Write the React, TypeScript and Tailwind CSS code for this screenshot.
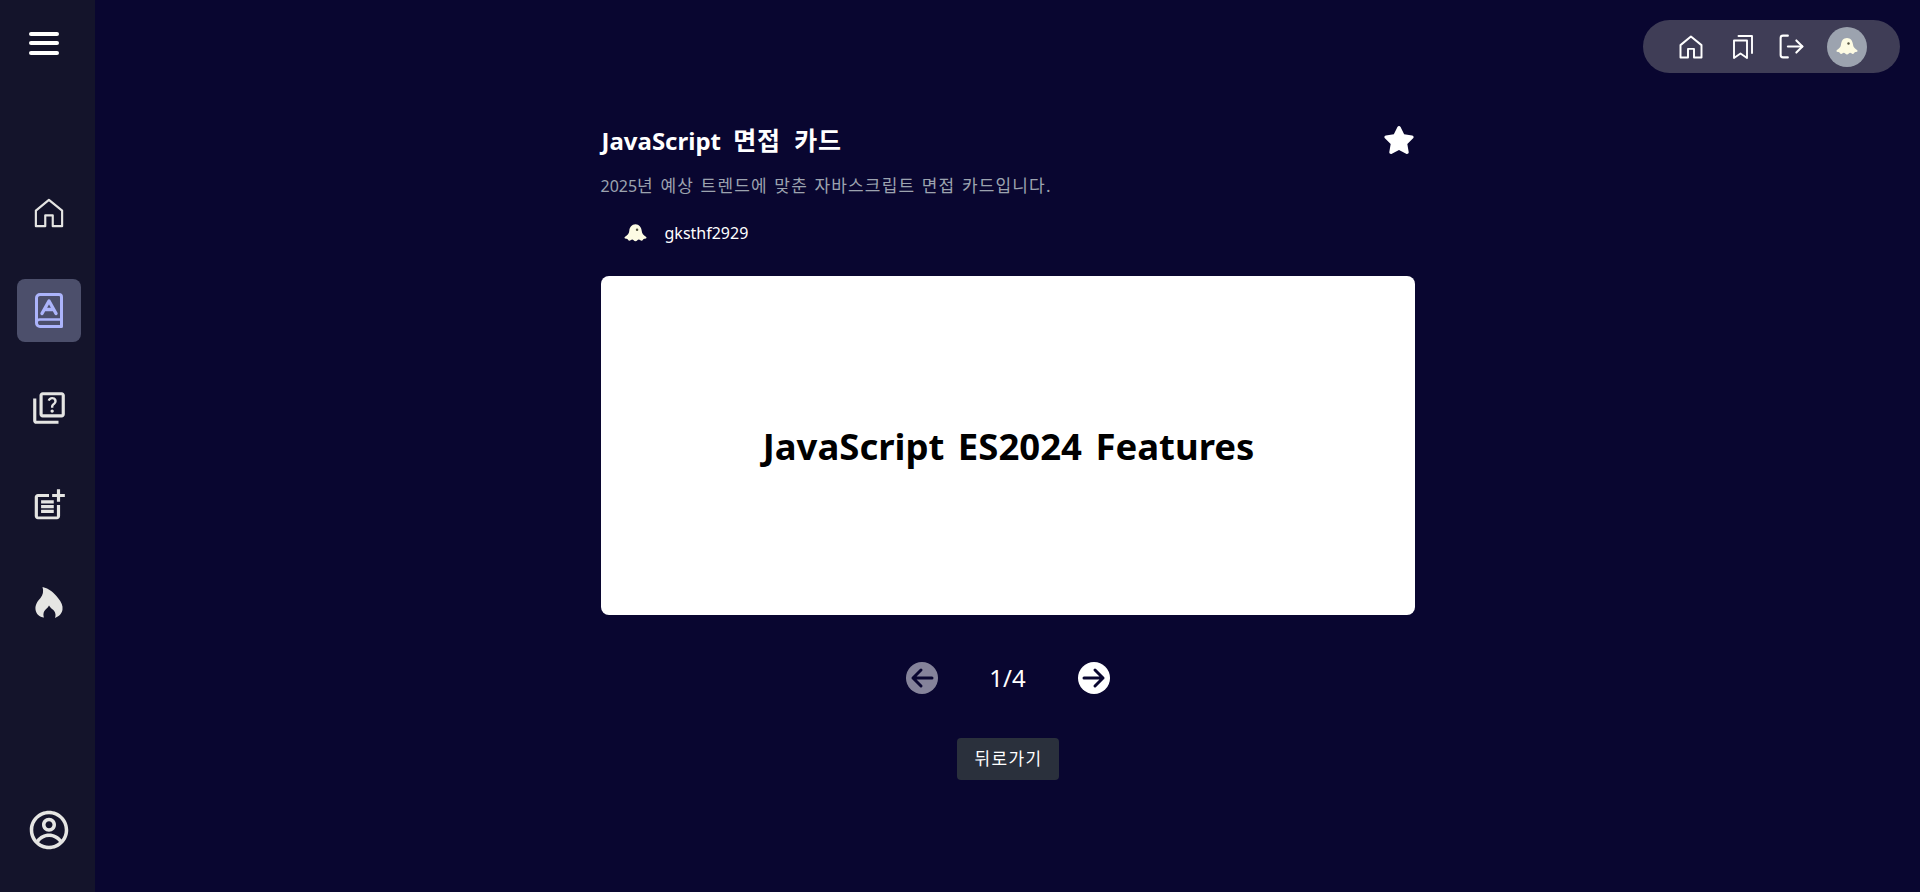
import React from 'react';
import { MdOutlineQuiz, MdOutlinePostAdd } from 'react-icons/md';
import { CgProfile } from 'react-icons/cg';
import { FaStar } from 'react-icons/fa';
import { LuLogOut } from 'react-icons/lu';

const fontStack = { fontFamily: '"Noto Sans", "Noto Sans CJK KR", sans-serif' };

function HomeIcon({ className, strokeWidth = 2 }: { className?: string; strokeWidth?: number }) {
  return (
    <svg className={className} viewBox="0 0 32 32" fill="none" stroke="currentColor" strokeWidth={strokeWidth} strokeLinejoin="round" strokeLinecap="round">
      <path d="M2 13.5 15.9 2 30 13.5V30H20V18.5H12V30H2Z" />
    </svg>
  );
}

function WordBookIcon({ className }: { className?: string }) {
  return (
    <svg className={className} viewBox="0 0 28 35" fill="none" stroke="currentColor" strokeWidth="3" strokeLinejoin="round" strokeLinecap="round">
      <path d="M5 1.500h19a2.500 2.500 0 0 1 2.500 2.500v29.500H5A3.500 3.500 0 0 1 1.500 30V5A3.500 3.500 0 0 1 5 1.500Z" />
      <path d="M1.500 29A3.500 3.500 0 0 1 5 26.500h21.500" strokeWidth="2.4" />
      <path d="M7 20.500 14 8l7 12.500M9.500 16.500h9" strokeWidth="3.400" />
    </svg>
  );
}

function BookmarksIcon({ className }: { className?: string }) {
  return (
    <svg className={className} viewBox="0 0 20 24" fill="none" stroke="currentColor" strokeWidth="1.9" strokeLinejoin="round" strokeLinecap="round">
      <path d="M1 5.500h13V23l-6.500-4.500L1 23Z" />
      <path d="M5.500 1h13.500v17" />
    </svg>
  );
}

function FlameIcon({ className }: { className?: string }) {
  return (
    <svg className={className} viewBox="0 0 28 32" fill="currentColor">
      <path d="M7.500 0C14 1.500 19 5.500 23 11c3.500 4 5 8 4.500 11.500-.5 4-3.500 7-7.500 8.500 1-3 .5-5-.8-7C18 22.500 15.500 21 14 18.500c-1.200 2.500-3.500 3.500-4.600 5.500-1.200 2-1.200 4.500-.4 6.500-4.500-.5-8-3.500-8.500-8C0 18 2.500 14 5.500 11c2.500-3 3.300-7 2-11Z" />
    </svg>
  );
}

// round pager button: disc with the arrow knocked out in the page colour
function PagerArrow({ direction, className }: { direction: 'left' | 'right'; className?: string }) {
  return (
    <svg className={className} viewBox="0 0 32 32" fill="none">
      <circle cx="16" cy="16" r="16" fill="currentColor" />
      <path
        d={direction === 'left' ? 'M26 16H7M15 8l-8 8 8 8' : 'M6 16h19M17 8l8 8-8 8'}
        stroke="#090630"
        strokeWidth="3"
        strokeLinecap="round"
        strokeLinejoin="round"
      />
    </svg>
  );
}

// little ghost mascot used as the avatar
function Ghost({ className }: { className?: string }) {
  return (
    <svg className={className} viewBox="0 0 24 20">
      <path
        fill="#fdfbe3"
        d="M12 1c3.600 0 5.600 2.800 6 6.500.2 2.400 1.600 4 4 5.500 1.200.8.600 2-1 2-.8 0-1.400.2-1.800 1-.6 1.200-2 1.200-2.800.3-.8-.8-1.800-.8-2.600.2-1 1.200-2.600 1.200-3.600 0-.8-1-1.800-1-2.600-.2-.9.900-2.200.9-2.800-.3-.4-.8-1-1-1.800-1-1.600 0-2.200-1.200-1-2 2.400-1.500 3.800-3.100 4-5.500C6.400 3.800 8.400 1 12 1Z"
      />
      <circle cx="13.500" cy="6.500" r="1.200" fill="#55533f" />
    </svg>
  );
}

export default function App() {
  return (
    <div className="flex h-[892px] overflow-hidden bg-[#090630] text-white" style={fontStack}>
      {/* Left rail */}
      <aside className="flex w-[95px] shrink-0 flex-col bg-[#14142b]">
        <button className="ml-[29px] mt-[31px] flex h-[24px] w-[30px] flex-col justify-between py-[0.5px]">
          <span className="block h-[4px] w-[30px] rounded-full bg-white" />
          <span className="block h-[4px] w-[30px] rounded-full bg-white" />
          <span className="block h-[4px] w-[30px] rounded-full bg-white" />
        </button>

        <nav className="mt-[126px] flex flex-col items-center pl-[2px] text-[#e5e5e3]">
          <div className="flex h-[63px] w-[64px] items-center justify-center">
            <HomeIcon className="h-[30px] w-[30px]" strokeWidth={2.3} />
          </div>
          <div className="mt-[35px] flex h-[63px] w-[64px] items-center justify-center rounded-lg bg-[#4c4f6b] text-[#acb4fb]">
            <WordBookIcon className="h-[35px] w-[28px]" />
          </div>
          <div className="mt-[48px] flex h-[36px] w-[64px] items-center justify-center">
            <MdOutlineQuiz className="h-[38px] w-[38px] shrink-0" />
          </div>
          <div className="mt-[61px] flex h-[36px] w-[64px] items-center justify-center">
            <MdOutlinePostAdd className="h-[38px] w-[38px] shrink-0" />
          </div>
          <div className="mt-[62px] flex h-[36px] w-[64px] items-center justify-center">
            <FlameIcon className="h-[32px] w-[28px] shrink-0" />
          </div>
        </nav>

        <div className="mb-[41px] mt-auto flex justify-center pl-[2px] text-[#e5e5e3]">
          <CgProfile className="h-[42px] w-[42px]" />
        </div>
      </aside>

      <main className="flex min-w-0 flex-1 flex-col">
        {/* Top right pill */}
        <header className="flex justify-end pr-[20px] pt-[20px]">
          <div className="flex h-[53px] w-[257px] items-center rounded-full bg-[#3f3d56] pl-[36px]">
            <HomeIcon className="h-[24px] w-[24px]" strokeWidth={2.6} />
            <BookmarksIcon className="ml-[30px] h-[24px] w-[20px]" />
            <LuLogOut className="ml-[24px] h-[29px] w-[29px]" strokeWidth={1.7} />
            <div className="ml-[21px] flex h-[40px] w-[40px] items-center justify-center rounded-full bg-[#9ca3af]">
              <Ghost className="h-[20px] w-[24px]" />
            </div>
          </div>
        </header>

        <section className="mx-auto mt-[48px] flex w-[814px] flex-col">
          <div className="flex h-[38px] items-center justify-between">
            <h1 className="pl-[1px] text-[24px] font-bold leading-[38px] [word-spacing:6px]">
              JavaScript <span className="text-[25px] tracking-[0.8px]">면접 카드</span>
            </h1>
            <FaStar className="h-[28px] w-[32px]" />
          </div>
          <p className="mt-[15px] text-[16px] leading-[24px] text-[#9ca3af] [word-spacing:1px]">
            2025<span className="text-[17px] tracking-[1.15px]">년 예상 트렌드에 맞춘 자바스크립트 면접 카드입니다.</span>
          </p>
          <div className="mt-[17px] flex h-[36px] items-center pl-[22px]">
            <Ghost className="h-[21px] w-[25px]" />
            <span className="ml-[17px] text-[16px]">gksthf2929</span>
          </div>

          <div className="mt-[25px] flex h-[339px] items-center justify-center rounded-lg bg-white pt-[2px]">
            <h2 className="pl-[2px] text-[36.5px] font-bold text-black [word-spacing:4px]">JavaScript ES2024 Features</h2>
          </div>

          <div className="mt-[43px] flex h-[40px] items-center justify-center">
            <PagerArrow direction="left" className="h-[32px] w-[32px] text-[#85839a]" />
            <span className="mx-[48px] w-[44px] text-center text-[24px]">1/4</span>
            <PagerArrow direction="right" className="h-[32px] w-[32px] text-white" />
          </div>

          <button className="mx-auto mt-[40px] h-[42px] w-[102px] rounded bg-[#2a303c] pl-[2px] text-[17px] tracking-[1.3px]">뒤로가기</button>
        </section>
      </main>
    </div>
  );
}
